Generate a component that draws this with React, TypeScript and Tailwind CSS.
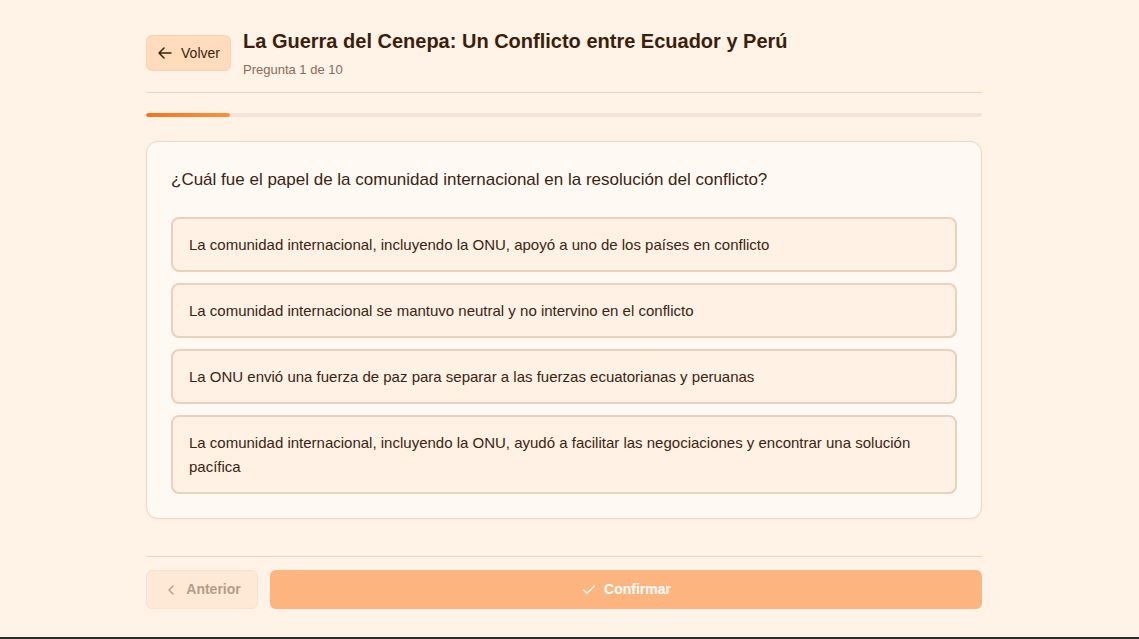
import React from "react";
import { ChevronLeft, Check } from "lucide-react";

const options = [
  "La comunidad internacional, incluyendo la ONU, apoyó a uno de los países en conflicto",
  "La comunidad internacional se mantuvo neutral y no intervino en el conflicto",
  "La ONU envió una fuerza de paz para separar a las fuerzas ecuatorianas y peruanas",
  "La comunidad internacional, incluyendo la ONU, ayudó a facilitar las negociaciones y encontrar una solución pacífica",
];

export default function App() {
  return (
    <div className="w-full flex flex-col" style={{ fontFamily: '"Liberation Sans", Arial, sans-serif' }}>
      <div className="h-[637px] bg-[#fff2e7] overflow-hidden">
        <div className="ml-[146px] w-[836px] pt-[29px]">
          <div className="flex items-start gap-3 pb-[13px] border-b border-[#ecd5bf]">
            <button className="mt-[6px] h-[36px] w-[85px] flex items-center justify-center gap-[8px] rounded-[6px] bg-[#fedcbc] border border-[#f7d2ae] text-[14px] text-[#3b2210]">
              <svg width="16" height="16" viewBox="0 0 24 24" fill="none" stroke="currentColor" strokeWidth="2.2" strokeLinecap="round" strokeLinejoin="round">
                <path d="M10.5 19.5 3 12m0 0 7.5-7.5M3 12h18" />
              </svg>
              <span>Volver</span>
            </button>
            <div className="flex flex-col">
              <h1 className="text-[20px] leading-[24px] font-bold text-[#3b1f0b]">
                La Guerra del Cenepa: Un Conflicto entre Ecuador y Perú
              </h1>
              <p className="mt-[8px] text-[13px] leading-[18px] text-[#8a6b56]">Pregunta 1 de 10</p>
            </div>
          </div>
          <div className="mt-[20px] h-[4px] w-full rounded-full bg-[#f2e4d8] overflow-hidden">
            <div className="h-full w-[10%] rounded-full bg-gradient-to-r from-[#f97316] to-[#fb923c]" />
          </div>
          <div className="mt-[24px] rounded-[12px] border border-[#ecd8c4] bg-[#fff9f4] p-6 shadow-[0_1px_2px_rgba(180,120,60,0.08)]">
            <p className="text-[17px] leading-[28px] text-[#3b2412]">
              ¿Cuál fue el papel de la comunidad internacional en la resolución del conflicto?
            </p>
            <div className="mt-[23px] flex flex-col gap-[11px]">
              {options.map((o) => (
                <div
                  key={o}
                  className="rounded-[8px] border-2 border-[#ead2ba] bg-[#fff1e4] px-4 py-[13.5px] text-[15px] leading-[24px] text-[#3b2412]"
                >
                  {o}
                </div>
              ))}
            </div>
          </div>
          <div className="mt-[37px] border-t border-[#ecd5bf] pt-[13px] flex gap-3">
            <button className="h-[39px] w-[112px] flex items-center justify-center gap-[7px] rounded-[6px] bg-[#fee9d6] border border-[#fbe0c8] text-[14px] font-bold text-[#b49c88]">
              <ChevronLeft size={16} strokeWidth={2} />
              <span>Anterior</span>
            </button>
            <button className="h-[39px] flex-1 flex items-center justify-center gap-[7px] rounded-[6px] bg-[#fdb47e] text-[14px] font-bold text-white">
              <Check size={16} strokeWidth={2} />
              <span>Confirmar</span>
            </button>
          </div>
        </div>
      </div>
      <div className="h-[2px] bg-[#2a2a2a]" />
    </div>
  );
}
